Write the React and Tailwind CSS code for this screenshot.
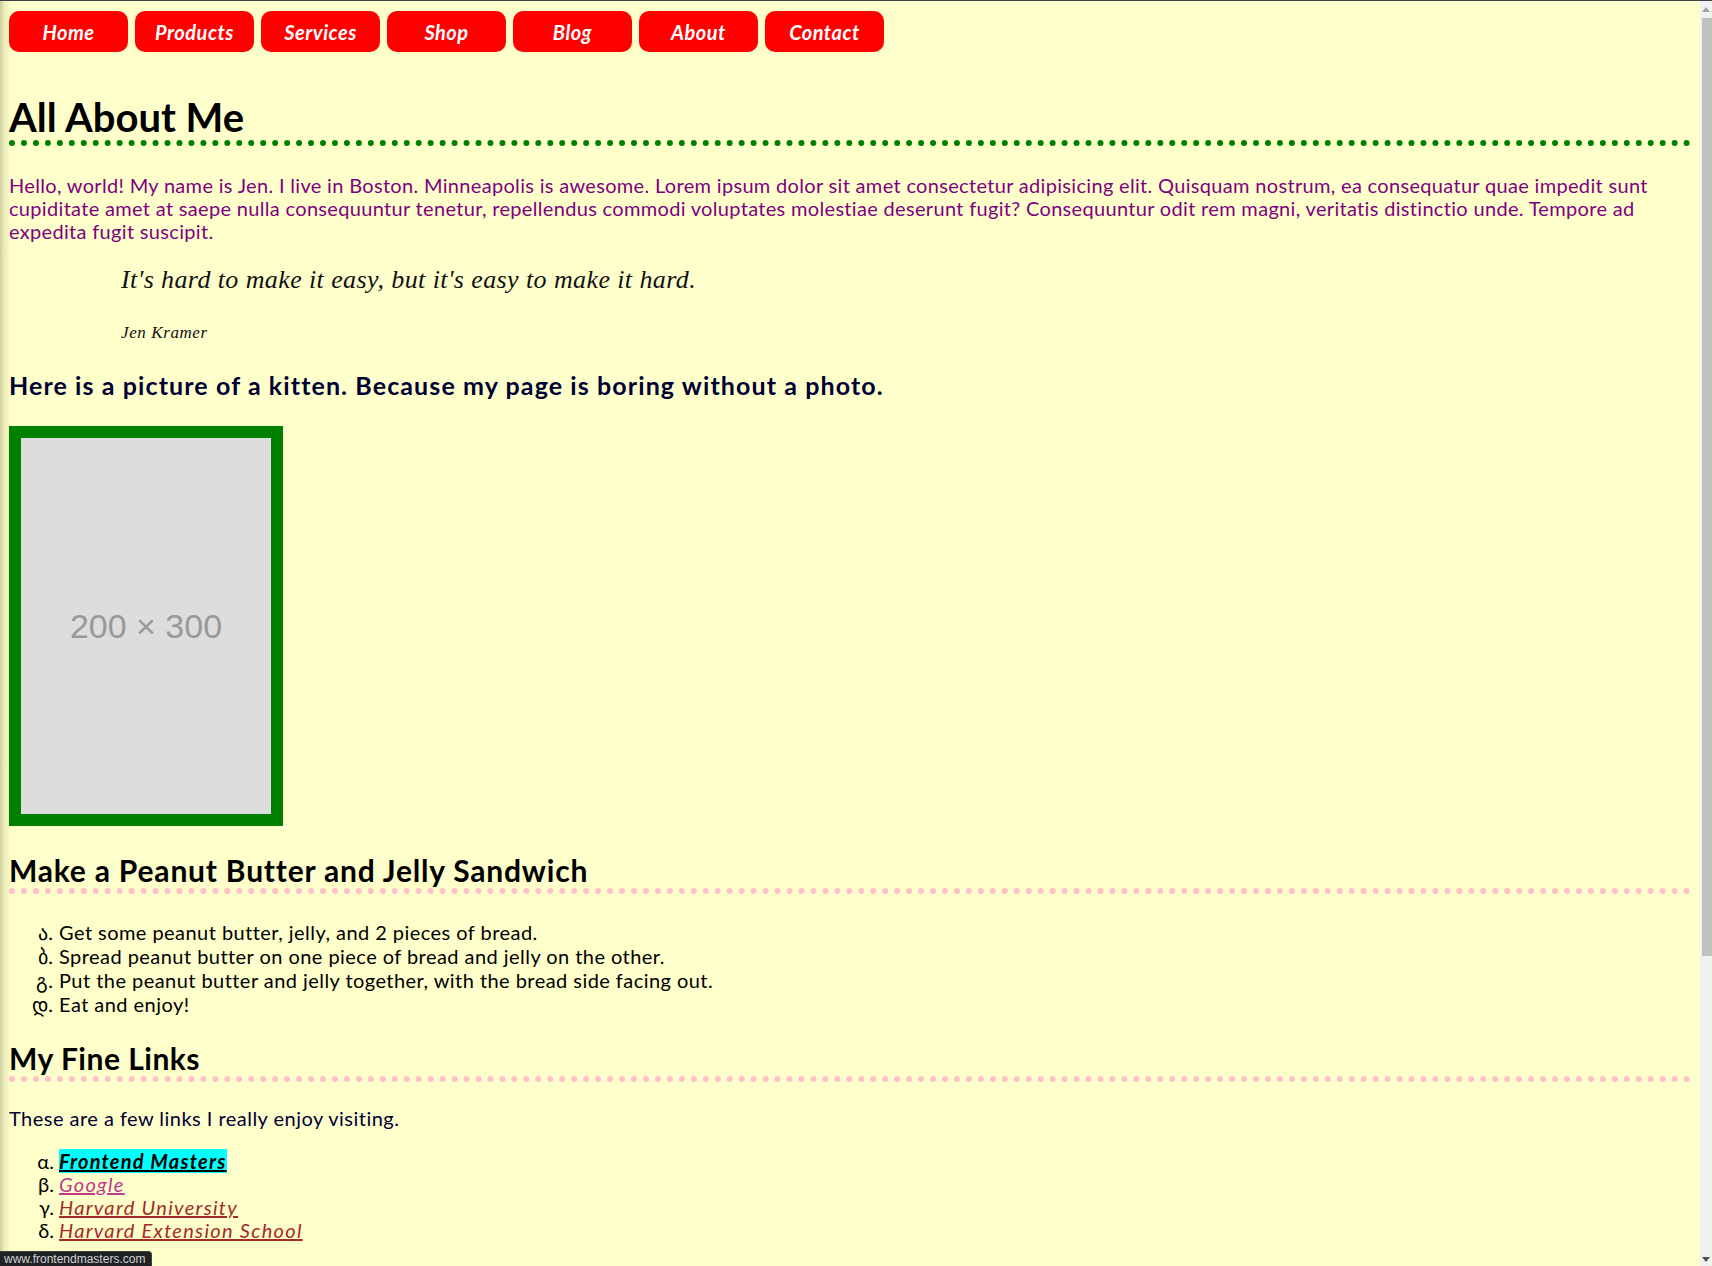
import React from "react";

const navItems = ["Home", "Products", "Services", "Shop", "Blog", "About", "Contact"];

const steps = [
  "Get some peanut butter, jelly, and 2 pieces of bread.",
  "Spread peanut butter on one piece of bread and jelly on the other.",
  "Put the peanut butter and jelly together, with the bread side facing out.",
  "Eat and enjoy!",
];

const links = [
  { label: "Frontend Masters", cls: "bg-[#00ffff] text-black font-bold tracking-[1.2px]" },
  { label: "Google", cls: "text-[#c0398c] tracking-[1.3px]" },
  { label: "Harvard University", cls: "text-[#a52a2a] tracking-[1.3px]" },
  { label: "Harvard Extension School", cls: "text-[#a52a2a] tracking-[1.3px]" },
];

function Scrollbar() {
  return (
    <div className="w-[12px] shrink-0 bg-[#f1f1f1] flex flex-col">
      <div className="h-[17px] flex items-center justify-center">
        <svg width="8" height="5" viewBox="0 0 8 5">
          <path d="M0 5 L4 0 L8 5 Z" fill="#a3a3a3" />
        </svg>
      </div>
      <div className="h-[938px] ml-[2px] bg-[#c1c1c1]" />
      <div className="flex-1" />
      <div className="h-[14px] flex items-center justify-center">
        <svg width="8" height="5" viewBox="0 0 8 5">
          <path d="M0 0 L4 5 L8 0 Z" fill="#505050" />
        </svg>
      </div>
    </div>
  );
}

export default function App() {
  return (
    <div className="relative h-[1266px] overflow-hidden border-t border-[#3c4043] flex font-['Lato',sans-serif]">
      <main className="flex-1 bg-[linear-gradient(to_right,#cfcf9f_0px,#ececba_4px,#ffffcc_11px)] px-[9px]">
        {/* nav */}
        <nav className="flex gap-[7px] pt-[10px]">
          {navItems.map((item) => (
            <a
              key={item}
              className="w-[119px] h-[41px] rounded-[10px] bg-[#ff0000] text-white italic font-bold text-[20px] tracking-[0.5px] flex items-center justify-center"
            >
              {item}
            </a>
          ))}
        </nav>

        <h1 className="mt-[42px] text-[40px] leading-[46px] font-bold text-black border-b-[6px] border-dotted border-[#008000]">
          All About Me
        </h1>

        <p className="mt-[28px] text-[20px] leading-[23px] tracking-[0.32px] text-[#800080]">
          Hello, world! My name is Jen. I live in Boston. Minneapolis is awesome. Lorem ipsum dolor sit amet
          consectetur adipisicing elit. Quisquam nostrum, ea consequatur quae impedit sunt cupiditate amet at saepe
          nulla consequuntur tenetur, repellendus commodi voluptates molestiae deserunt fugit? Consequuntur odit rem
          magni, veritatis distinctio unde. Tempore ad expedita fugit suscipit.
        </p>

        <blockquote className="pl-[112px] font-['Liberation_Serif',serif] italic text-[#111]">
          <p className="mt-[23px] text-[26px] leading-[28px] tracking-[0.4px]">
            It's hard to make it easy, but it's easy to make it hard.
          </p>
          <p className="mt-[29px] text-[17px] leading-[20px] tracking-[0.6px]">Jen Kramer</p>
        </blockquote>

        <h3 className="mt-[28px] text-[25px] leading-[28px] font-bold tracking-[1.1px] text-[#000033]">
          Here is a picture of a kitten. Because my page is boring without a photo.
        </h3>

        <div className="mt-[27px] w-[274px] h-[400px] border-[12px] border-[#008000] bg-[#dddddd] flex items-center justify-center">
          <span className="font-['Liberation_Sans',sans-serif] text-[34px] text-[#999999]">200 × 300</span>
        </div>

        <h2 className="mt-[26px] text-[30px] leading-[36px] font-bold tracking-[0.8px] text-black border-b-[6px] border-dotted border-[#ffc0cb]">
          Make a Peanut Butter and Jelly Sandwich
        </h2>

        <ol className="mt-[26px] pl-[50px] list-[georgian] text-[20px] leading-[24px] tracking-[0.45px] text-black">
          {steps.map((s) => (
            <li key={s}>{s}</li>
          ))}
        </ol>

        <h2 className="mt-[24px] text-[30px] leading-[36px] font-bold tracking-[0.5px] text-black border-b-[6px] border-dotted border-[#ffc0cb]">
          My Fine Links
        </h2>

        <p className="mt-[25px] text-[20px] leading-[23px] tracking-[0.47px] text-[#000033]">
          These are a few links I really enjoy visiting.
        </p>

        <ol className="mt-[20px] pl-[50px] list-[lower-greek] text-[20px] leading-[23px] text-black">
          {links.map((l) => (
            <li key={l.label}>
              <a className={`italic underline ${l.cls}`}>{l.label}</a>
            </li>
          ))}
        </ol>
      </main>

      <Scrollbar />

      {/* hover status bubble */}
      <div className="absolute left-0 bottom-0 h-[15px] w-[152px] bg-[#202124] border-t border-r border-[#3c4043] rounded-tr-[4px] pl-[4px] text-[12px] leading-[14px] text-[#d0d3d6] font-['Liberation_Sans',sans-serif]">
        www.frontendmasters.com
      </div>
    </div>
  );
}
